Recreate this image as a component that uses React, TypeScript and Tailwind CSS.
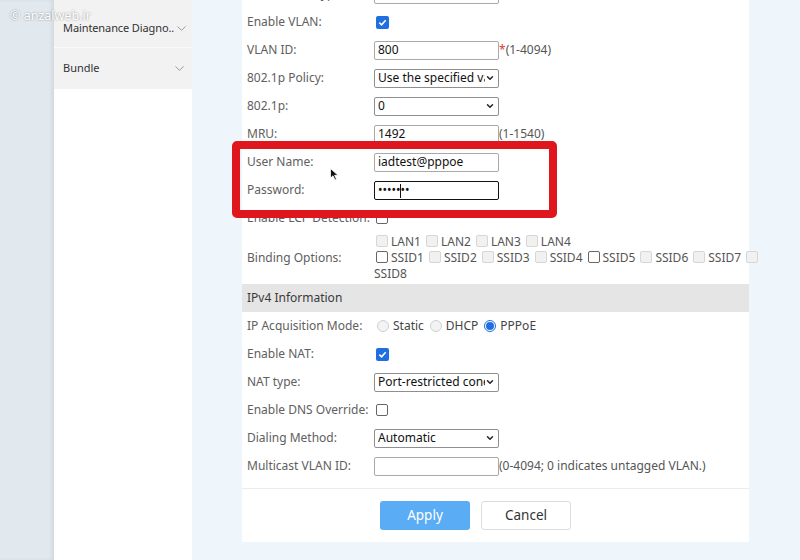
import { ChevronDown } from 'lucide-react'

const font = { fontFamily: '"Noto Sans", "Open Sans", Arial, sans-serif' }

function Check({ checked = false, disabled = false }: { checked?: boolean; disabled?: boolean }) {
  if (checked) {
    return (
      <span className="inline-flex w-[13px] h-[13px] items-center justify-center rounded-[2px] bg-[#1f6fe0] align-middle">
        <svg width="9" height="9" viewBox="0 0 10 10">
          <path d="M1.5 5.2 L4 7.5 L8.5 2.5" fill="none" stroke="white" strokeWidth="1.8" />
        </svg>
      </span>
    )
  }
  return (
    <span
      className={
        disabled
          ? 'inline-block w-[12px] h-[12px] rounded-[2px] border border-[#d6d6d6] bg-[#f1f1f1] align-[-1px]'
          : 'inline-block w-[12px] h-[12px] rounded-[2px] border border-[#666] bg-white align-[-1px]'
      }
    />
  )
}

function Radio({ on = false }: { on?: boolean }) {
  return on ? (
    <span className="inline-flex w-[12px] h-[12px] items-center justify-center rounded-full border border-[#1f6fe0] bg-white">
      <span className="w-[8px] h-[8px] rounded-full bg-[#1f6fe0]" />
    </span>
  ) : (
    <span className="inline-block w-[12px] h-[12px] rounded-full border border-[#d0d0d0] bg-[#f3f3f3]" />
  )
}

function TextBox({ value = '', focused = false }: { value?: string; focused?: boolean }) {
  return (
    <div
      className={`w-[125px] h-[19px] flex items-center px-[3px] text-[12px] text-[#111] rounded-[2px] bg-white border ${
        focused ? 'border-[#111] border-[1.5px]' : 'border-[#a9a9a9]'
      }`}
    >
      {value}
    </div>
  )
}

function Select({ value }: { value: string }) {
  return (
    <div className="w-[125px] h-[19px] flex items-center pl-[3px] pr-[3px] text-[12px] text-[#111] rounded-[2px] bg-white border border-[#8f8f8f]">
      <span className="flex-1 overflow-hidden whitespace-nowrap">{value}</span>
      <ChevronDown size={10} strokeWidth={3.5} className="text-[#222] shrink-0" />
    </div>
  )
}

function Row({ label, children }: { label: string; children?: React.ReactNode }) {
  return (
    <div className="h-[28px] flex items-center">
      <div className="w-[127px] shrink-0 text-[12px] text-[#606060] whitespace-nowrap">{label}</div>
      <div className="flex items-center text-[12px] text-[#555]">{children}</div>
    </div>
  )
}

function Opt({ label, disabled = true }: { label: string; disabled?: boolean }) {
  return (
    <span className="inline-block mr-[5px] whitespace-nowrap">
      <Check disabled={disabled} />
      <span className="ml-[3px]">{label}</span>
    </span>
  )
}

export default function App() {
  return (
    <div className="relative w-[800px] h-[560px] flex overflow-hidden bg-[#eef6fc]" style={font}>
      {/* left strip */}
      <div className="w-[54px] shrink-0 bg-[#e2e9ee] shadow-[inset_-3px_0_3px_rgba(0,0,0,0.06)]" />

      {/* sidebar */}
      <div className="w-[138px] shrink-0 bg-white flex flex-col">
        <div className="h-[48px] bg-[#f2f2f2] border-b border-[#fafafa] flex items-center pt-[9px] pl-[9px] pr-[5px]">
          <span className="flex-1 text-[11px] tracking-[-0.1px] text-[#333] whitespace-nowrap">Maintenance Diagno..</span>
          <ChevronDown size={15} strokeWidth={1.6} className="text-[#9a9a9a] shrink-0" />
        </div>
        <div className="h-[41px] bg-[#f2f2f2] flex items-center pl-[9px] pr-[5px]">
          <span className="flex-1 text-[11px] text-[#333]">Bundle</span>
          <ChevronDown size={15} strokeWidth={1.6} className="text-[#9a9a9a] shrink-0" />
        </div>
      </div>

      {/* main */}
      <div className="flex-1 pl-[50px]">
        <div className="w-[507px] -mt-[20px] bg-white">
          <div className="pl-[5px]">
            <Row label="Connection Type:">
              <TextBox />
            </Row>
            <Row label="Enable VLAN:">
              <span className="ml-[2px] flex"><Check checked /></span>
            </Row>
            <Row label="VLAN ID:">
              <TextBox value="800" />
              <span className="text-[#e53935]">*</span>
              <span>(1-4094)</span>
            </Row>
            <Row label="802.1p Policy:">
              <Select value="Use the specified value" />
            </Row>
            <Row label="802.1p:">
              <Select value="0" />
            </Row>
            <Row label="MRU:">
              <TextBox value="1492" />
              <span>(1-1540)</span>
            </Row>
            <Row label="User Name:">
              <TextBox value="iadtest@pppoe" />
            </Row>
            <Row label="Password:">
              <div className="relative">
                <TextBox value="•••••••" focused />
                <span className="absolute left-[26px] top-[3px] w-[1px] h-[14px] bg-[#111]" />
              </div>
            </Row>
            <Row label="Enable LCP Detection:">
              <span className="ml-[2px] flex"><Check /></span>
            </Row>
            <div className="flex items-center py-[2px] h-[52px]">
              <div className="w-[127px] shrink-0 text-[12px] text-[#606060]">Binding Options:</div>
              <div className="w-[372px] text-[12px] leading-[16px] text-[#555]">
                <div className="ml-[2px]">
                  <Opt label="LAN1" />
                  <Opt label="LAN2" />
                  <Opt label="LAN3" />
                  <Opt label="LAN4" />
                </div>
                <div className="ml-[2px] whitespace-nowrap">
                  <Opt label="SSID1" disabled={false} />
                  <Opt label="SSID2" />
                  <Opt label="SSID3" />
                  <Opt label="SSID4" />
                  <Opt label="SSID5" disabled={false} />
                  <Opt label="SSID6" />
                  <Opt label="SSID7" />
                  <Check disabled />
                </div>
                <div>SSID8</div>
              </div>
            </div>
          </div>

          <div className="h-[28px] bg-[#e5e5e5] flex items-center pl-[5px] text-[12px] text-[#3a3a3a]">
            IPv4 Information
          </div>

          <div className="pl-[5px]">
            <Row label="IP Acquisition Mode:">
              <span className="inline-flex items-center gap-[4px] ml-[3px]">
                <Radio /> <span className="text-[#444] mr-[2px]">Static</span>
                <Radio /> <span className="text-[#444] mr-[2px]">DHCP</span>
                <Radio on /> <span className="text-[#444]">PPPoE</span>
              </span>
            </Row>
            <Row label="Enable NAT:">
              <span className="ml-[2px] flex"><Check checked /></span>
            </Row>
            <Row label="NAT type:">
              <Select value="Port-restricted cone NAT" />
            </Row>
            <Row label="Enable DNS Override:">
              <span className="ml-[2px] flex"><Check /></span>
            </Row>
            <Row label="Dialing Method:">
              <Select value="Automatic" />
            </Row>
            <Row label="Multicast VLAN ID:">
              <TextBox />
              <span>(0-4094; 0 indicates untagged VLAN.)</span>
            </Row>
          </div>

          <div className="mt-[8px] border-t border-[#ececec] pt-[12px] pb-[12px] pl-[138px] flex gap-[11px]">
            <button className="w-[90px] h-[29px] rounded-[3px] bg-[#5aadf5] text-white text-[13.5px]">Apply</button>
            <button className="w-[90px] h-[29px] rounded-[3px] bg-white border border-[#dcdcdc] text-[#333] text-[13.5px]">
              Cancel
            </button>
          </div>
        </div>
      </div>

      {/* red highlight around the credentials */}
      <div className="absolute left-[232px] top-[141px] w-[325px] h-[77px] border-[8px] border-[#e0161f] rounded-[5px]" />

      {/* mouse pointer */}
      <svg className="absolute left-[330px] top-[168px]" width="9" height="13" viewBox="0 0 9 13">
        <path d="M0.5 0.5 L0.5 10 L3 7.8 L5 12 L6.5 11.3 L4.6 7.3 L8 7.3 Z" fill="#111" stroke="white" strokeWidth="0.8" />
      </svg>

      {/* watermark */}
      <div className="absolute left-[10px] top-[7px] text-[12.5px] text-white [text-shadow:0_0_2px_rgba(0,0,0,0.45)]">
        © anzalweb.ir
      </div>
    </div>
  )
}
